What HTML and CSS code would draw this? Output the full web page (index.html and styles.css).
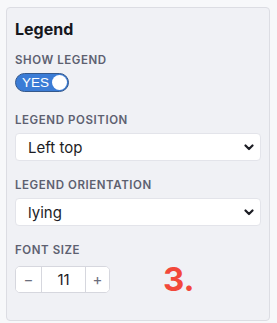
FILE: index.html
```html
<!DOCTYPE html>
<html lang="en">
<head>
  <meta charset="UTF-8">
  <title>Legend settings</title>
  <link rel="stylesheet" href="styles.css">
</head>
<body>

<div class="panel">
  <h2 class="panel-title">Legend</h2>

  <!-- show legend -->
  <div class="field field-toggle">
    <label class="field-label">Show legend</label>
    <button class="toggle on" type="button">
      <span class="toggle-text">YES</span>
      <span class="toggle-knob"></span>
    </button>
  </div>

  <div class="field">
    <label class="field-label">Legend position</label>
    <div class="select-wrap">
      <select class="select">
        <option>Left top</option>
        <option>Right top</option>
        <option>Left bottom</option>
        <option>Right bottom</option>
      </select>
      <svg class="select-arrow" width="10" height="7" viewBox="0 0 10 7">
        <path d="M1.5 1.5 L5 5 L8.5 1.5" fill="none" stroke="#1c1d24" stroke-width="2.2" stroke-linecap="round" stroke-linejoin="round"/>
      </svg>
    </div>
  </div>

  <div class="field">
    <label class="field-label">Legend orientation</label>
    <div class="select-wrap">
      <select class="select">
        <option>lying</option>
        <option>standing</option>
      </select>
      <svg class="select-arrow" width="10" height="7" viewBox="0 0 10 7">
        <path d="M1.5 1.5 L5 5 L8.5 1.5" fill="none" stroke="#1c1d24" stroke-width="2.2" stroke-linecap="round" stroke-linejoin="round"/>
      </svg>
    </div>
  </div>

  <div class="field">
    <label class="field-label">Font size</label>
    <div class="font-row">
      <div class="stepper">
        <button class="step-btn" type="button">&minus;</button>
        <span class="step-value">11</span>
        <button class="step-btn" type="button">+</button>
      </div>
      <span class="step-mark">3.</span>
    </div>
  </div>
</div>

</body>
</html>
```

FILE: styles.css
```css
/* === page === */
body {
  margin: 0;
  padding: 7px 7px 8px 6px;
  background: #f7f8fa;
  font-family: Inter, "Noto Sans", "Liberation Sans", sans-serif;
  color: #1c1d24;
}

/* === panel === */
.panel {
  width: 264px;
  box-sizing: border-box;
  padding: 11px 8px 24px 8px;
  background: #f0f1f5;
  border: 1px solid #dcdde3;
  border-radius: 4px;
}

.panel-title {
  margin: 0 0 14px;
  font-size: 16px;
  font-weight: 700;
  line-height: 20px;
  color: #16171d;
}

.field {
  margin-bottom: 17px;
}
.field-toggle {
  margin-bottom: 21px;
}
.field:last-child {
  margin-bottom: 0;
}

.field-label {
  display: block;
  margin-bottom: 6px;
  font-size: 11.5px;
  font-weight: 600;
  line-height: 14px;
  letter-spacing: 0.05em;
  text-transform: uppercase;
  color: #5d6070;
}

/* === toggle === */
.toggle {
  display: flex;
  align-items: center;
  justify-content: space-between;
  width: 54px;
  height: 19px;
  padding: 0 1px 0 6px;
  box-sizing: border-box;
  border: 1px solid #35598c;
  border-radius: 10px;
  background: #3b7cd6;
  cursor: pointer;
}

.toggle-text {
  font-family: inherit;
  font-size: 13.5px;
  font-weight: 500;
  color: #fff;
  line-height: 1;
}

.toggle-knob {
  width: 15px;
  height: 15px;
  border-radius: 50%;
  background: #fff;
}

/* === select === */
.select-wrap {
  position: relative;
}

.select {
  display: block;
  box-sizing: border-box;
  width: 246px;
  height: 28px;
  padding: 0 24px 0 0;
  text-indent: 12px;
  border: 1px solid #e3e4ea;
  border-radius: 4px;
  background: #fff;
  font-family: inherit;
  font-size: 15px;
  color: #1c1d24;
  appearance: none;
  -webkit-appearance: none;
}

.select-arrow {
  position: absolute;
  right: 7px;
  top: 11px;
  pointer-events: none;
}

/* === stepper === */
.font-row {
  display: flex;
  align-items: center;
  gap: 53px;
}

.stepper {
  display: flex;
  height: 27px;
  box-sizing: border-box;
  width: 95px;
  border: 1px solid #d6d7de;
  border-radius: 5px;
  background: #fff;
  overflow: hidden;
}

.step-btn {
  width: 25px;
  padding: 0;
  border: 0;
  background: #fff;
  font-family: inherit;
  font-size: 15px;
  color: #6b6e7c;
}

.step-value {
  flex: 1;
  border-left: 1px solid #d6d7de;
  border-right: 1px solid #d6d7de;
  text-align: center;
  line-height: 25px;
  font-size: 15px;
}

.step-btn:last-child {
  width: 23px;
}

.step-mark {
  font-size: 33px;
  font-weight: 700;
  color: #f2483a;
  line-height: 1;
}
```
